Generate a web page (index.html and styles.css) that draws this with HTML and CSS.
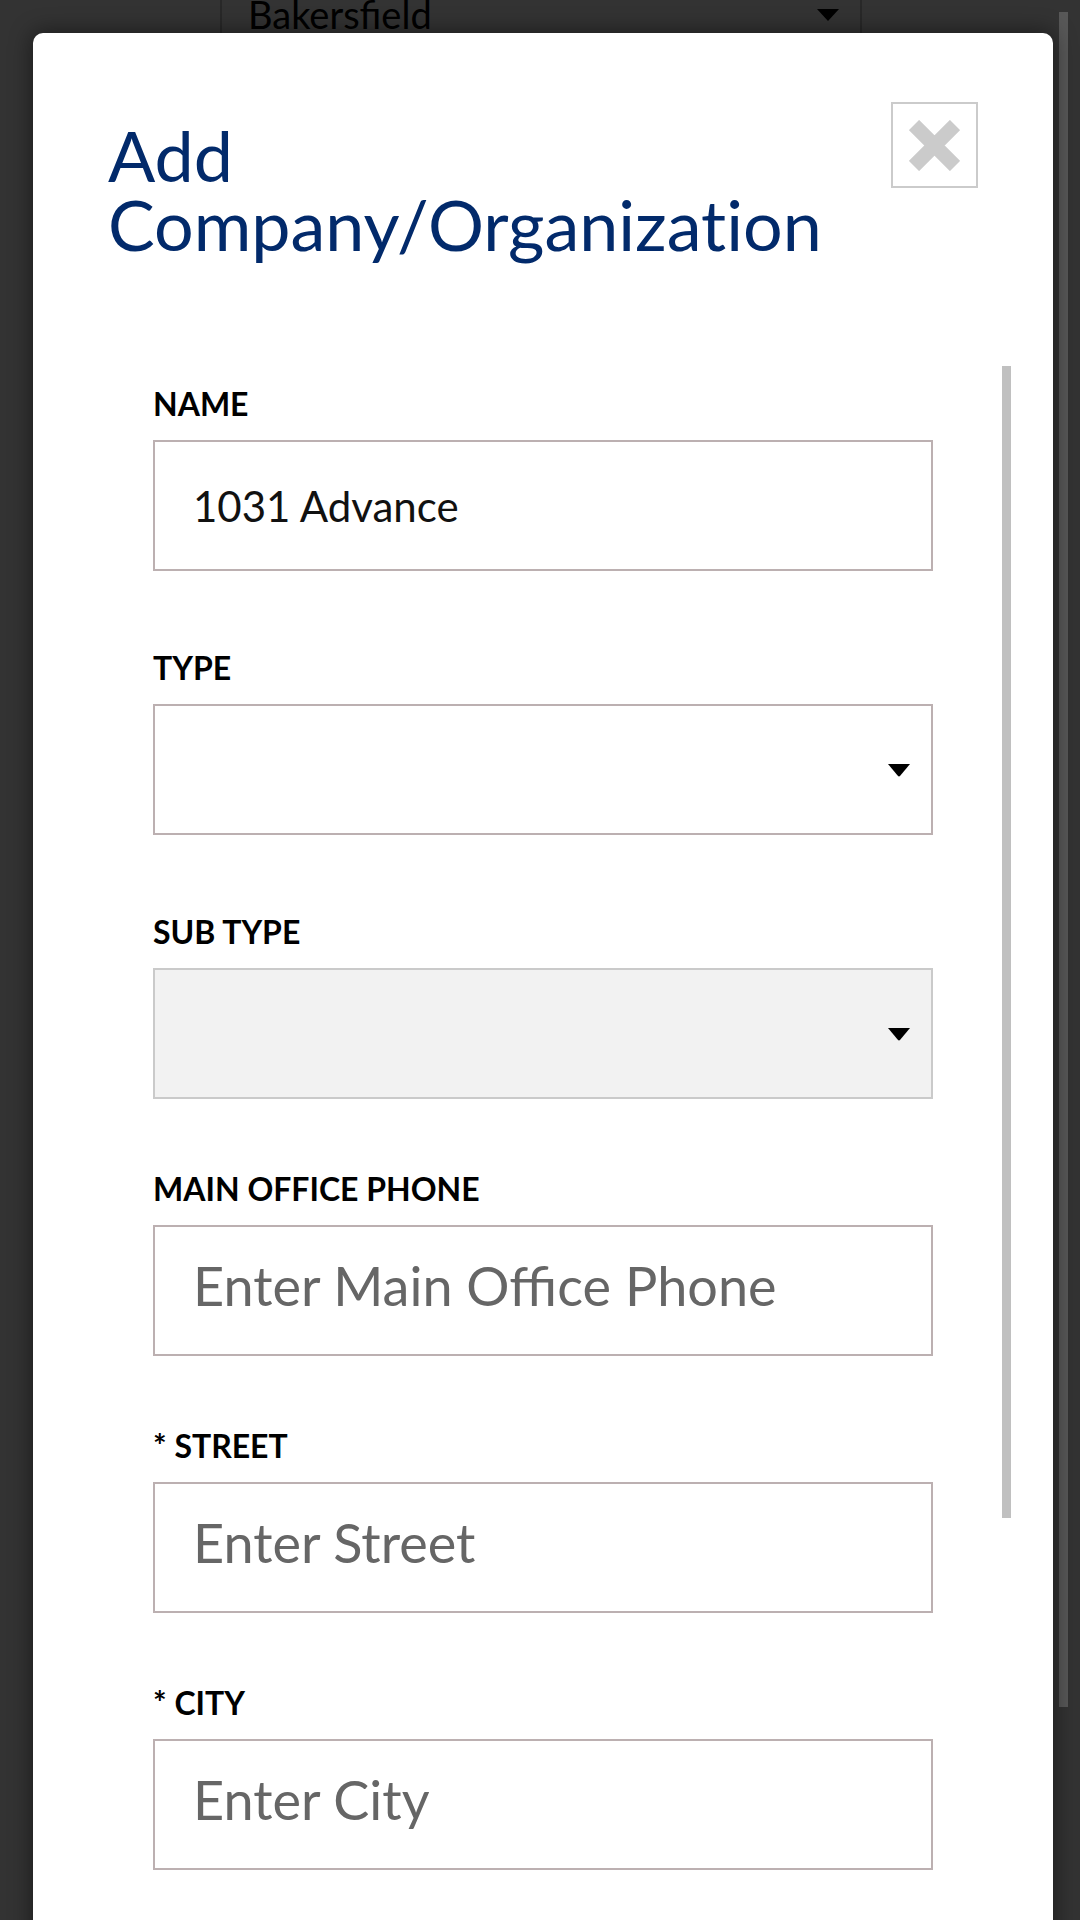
FILE: index.html
```html
<!DOCTYPE html>
<html lang="en">
<head>
<meta charset="utf-8">
<title>Add Company/Organization</title>
<link rel="stylesheet" href="styles.css">
</head>
<body>
  <div class="behind">
    <div class="bg-select">
      <span class="bg-select__text">Bakersfield</span>
      <svg class="bg-select__arrow" viewBox="0 0 22 12" aria-hidden="true"><polygon points="0,0 22,0 11,12"/></svg>
    </div>
  </div>
  <div class="page-scrollbar"></div>

  <div class="modal" role="dialog" aria-labelledby="modal-title">
    <div class="modal__header">
      <h1 class="modal__title" id="modal-title">Add Company/Organization</h1>
      <button class="modal__close" type="button" aria-label="Close">
        <svg viewBox="0 0 51 51" aria-hidden="true"><path d="M5 5 L46 46 M46 5 L5 46"/></svg>
      </button>
    </div>

    <form class="modal__body">
      <div class="field field--loose">
        <label class="field__label" for="f-name">NAME</label>
        <input class="control" id="f-name" type="text" value="1031 Advance">
      </div>
      <div class="field field--loose">
        <label class="field__label" for="f-type">TYPE</label>
        <div class="select-wrap">
          <select class="control" id="f-type"><option></option></select>
          <svg class="select-wrap__arrow" viewBox="0 0 22 13" aria-hidden="true"><path d="M0 0 H22 L12.2 11.8 Q11 13 9.8 11.8 Z"/></svg>
        </div>
      </div>
      <div class="field">
        <label class="field__label" for="f-subtype">SUB TYPE</label>
        <div class="select-wrap">
          <select class="control control--disabled" id="f-subtype" disabled><option></option></select>
          <svg class="select-wrap__arrow" viewBox="0 0 22 13" aria-hidden="true"><path d="M0 0 H22 L12.2 11.8 Q11 13 9.8 11.8 Z"/></svg>
        </div>
      </div>
      <div class="field">
        <label class="field__label" for="f-phone">MAIN OFFICE PHONE</label>
        <input class="control" id="f-phone" type="text" placeholder="Enter Main Office Phone">
      </div>
      <div class="field">
        <label class="field__label" for="f-street">* STREET</label>
        <input class="control" id="f-street" type="text" placeholder="Enter Street">
      </div>
      <div class="field">
        <label class="field__label" for="f-city">* CITY</label>
        <input class="control" id="f-city" type="text" placeholder="Enter City">
      </div>
    </form>

    <div class="modal__scrollbar"></div>
  </div>
</body>
</html>
```
FILE: styles.css
```css
html, body {
  margin: 0;
  padding: 0;
  height: 1920px;
  overflow: hidden;
  background: #333333;
  font-family: Lato, "Open Sans", sans-serif;
}

/* page behind the overlay */
.behind {
  padding-left: 220px;
}
.bg-select {
  position: relative;
  box-sizing: border-box;
  width: 642px;
  height: 120px;
  margin-top: -9px;
  padding-left: 26px;
  border-left: 2px solid #282828;
  border-right: 2px solid #282828;
  font-size: 38px;
  line-height: 46px;
  color: #000;
}
.bg-select__arrow {
  position: absolute;
  right: 21px;
  top: 18px;
  width: 22px;
  height: 12px;
  fill: #000;
}

.page-scrollbar {
  position: absolute;
  left: 1059px;
  top: 12px;
  width: 9px;
  height: 1695px;
  background: #585858;
}

/* modal */
.modal {
  position: absolute;
  left: 33px;
  top: 33px;
  width: 1020px;
  height: 2000px;
  background: #fff;
  border-radius: 10px;
  box-shadow: 0 0 22px 2px rgba(0, 0, 0, 0.45);
}

.modal__header {
  display: flex;
  justify-content: space-between;
  align-items: flex-start;
  padding: 69px 75px 0;
}
.modal__title {
  margin: 19px 0 0;
  font-weight: 400;
  font-size: 70px;
  line-height: 69px;
  color: #022a6b;
  font-variant-ligatures: no-common-ligatures;
}
.modal__close {
  flex: none;
  box-sizing: border-box;
  width: 87px;
  height: 86px;
  margin-left: 20px;
  padding: 0;
  border: 2px solid #cbcbcb;
  background: #fff;
  display: flex;
  align-items: center;
  justify-content: center;
}
.modal__close svg {
  width: 51px;
  height: 51px;
  stroke: #cbcbcb;
  stroke-width: 14.4;
  fill: none;
}

.modal__body {
  padding: 127px 120px 0;
}

.field {
  margin-bottom: 72px;
}
.field--loose {
  margin-bottom: 79px;
}
.field__label {
  display: block;
  margin-bottom: 18px;
  font-weight: 700;
  font-size: 32px;
  line-height: 36px;
  color: #000;
}

.control {
  display: block;
  box-sizing: border-box;
  width: 100%;
  height: 131px;
  margin: 0;
  padding: 0 38px 0 38px;
  border: 2px solid #bcb0b1;
  border-radius: 0;
  background: #fff;
  font-family: Lato, "Open Sans", sans-serif;
  font-size: 42px;
  color: #111;
  outline: none;
  -webkit-appearance: none;
  appearance: none;
}
.control:placeholder-shown {
  font-size: 54px;
  padding-bottom: 10px;
}
.control::placeholder {
  color: #666;
  opacity: 1;
}
.control--disabled {
  background: #f2f2f2;
  border-color: #cacaca;
  opacity: 1;
}

.select-wrap {
  position: relative;
}
.select-wrap__arrow {
  position: absolute;
  right: 23px;
  top: 50%;
  width: 22px;
  height: 13px;
  margin-top: -6px;
  fill: #000;
  pointer-events: none;
}

.modal__scrollbar {
  position: absolute;
  left: 969px;
  top: 333px;
  width: 9px;
  height: 1152px;
  background: #c0c0c0;
}
```
